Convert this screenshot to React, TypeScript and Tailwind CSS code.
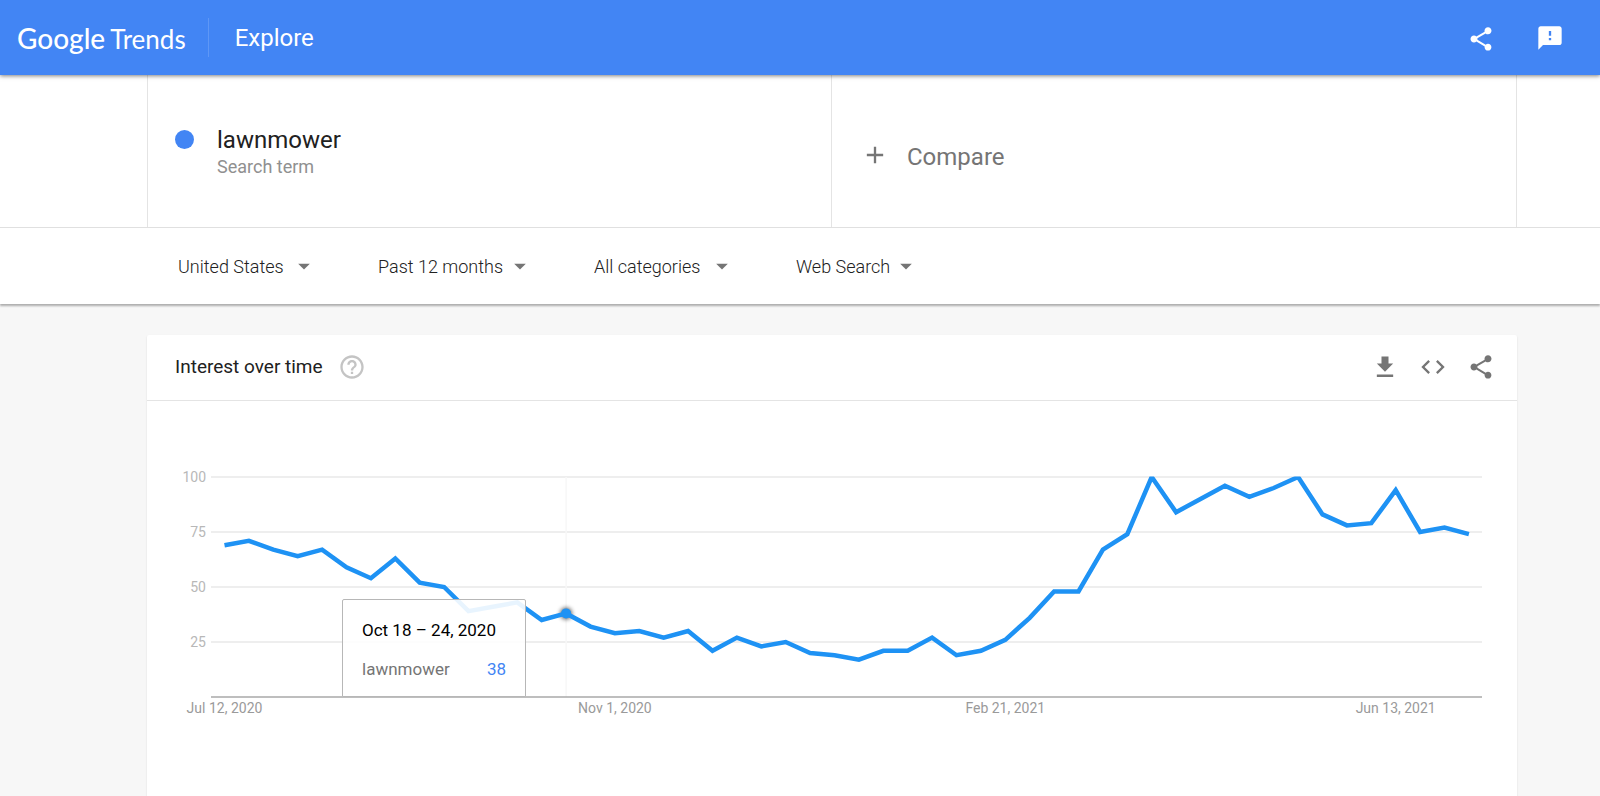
import React from "react";
import { MdAdd, MdArrowDropDown, MdCode, MdFeedback, MdHelpOutline, MdShare } from "react-icons/md";

const values = [
  69, 71, 67, 64, 67, 59, 54, 63, 52, 50, 39, 41, 43, 35, 38, 32, 29, 30, 27, 30, 21, 27, 23, 25, 20, 19,
  17, 21, 21, 27, 19, 21, 26, 36, 48, 48, 67, 74, 100, 84, 90, 96, 91, 95, 100, 83, 78, 79, 94, 75, 77, 74
];
const ticks = [100, 75, 50, 25];
const dates = [
  { index: 0, label: "Jul 12, 2020" },
  { index: 16, label: "Nov 1, 2020" },
  { index: 32, label: "Feb 21, 2021" },
  { index: 48, label: "Jun 13, 2021" }
];
const filters = [
  { label: "Region", value: "United States", width: "w-[140px]" },
  { label: "Time range", value: "Past 12 months", width: "w-[156px]" },
  { label: "Category", value: "All categories", width: "w-[142px]" },
  { label: "Search type", value: "Web Search", width: "w-[124px]" }
];
const active = 14;

const xAt = (index: number) => 77.5 + index * 24.4;
const yAt = (value: number) => 296 - value * 2.2;

function DownloadIcon() {
  return <svg viewBox="0 0 24 24" className="size-7" fill="currentColor" aria-hidden="true">
      <path d="M19 9h-4V3H9v6H5l7 7 7-7zM5 18.5v2h14v-2H5z" />
    </svg>;
}

function Header() {
  return <header className="relative z-10 flex h-[75px] items-center bg-[#4285f4] pl-[17px] pr-[36px] text-white shadow-[0_1px_4px_rgba(0,0,0,0.5)]">
      <a href="#home" className="flex items-baseline gap-[5px] pt-0.5 font-['Lato',sans-serif] leading-8">
        <span className="text-[28px] font-medium">Google</span>
        <span className="text-[26px]">Trends</span>
      </a>
      <div className="ml-[22px] h-[39px] w-px bg-[#5e97f6]" />
      <h1 className="ml-[26px] text-2xl">Explore</h1>
      <div className="ml-auto flex gap-[41px]">
        <button aria-label="Share" className="pt-0.5"><MdShare className="size-7" /></button>
        <button aria-label="Send feedback"><MdFeedback className="size-7" /></button>
      </div>
    </header>;
}

function SearchTerms() {
  return <section className="border-b border-[#e0e0e0] bg-white pl-[147px] pr-[83px]">
      <div className="grid h-[152px] grid-cols-2 border-x border-[#e4e4e4]">
        <div className="flex gap-[23px] border-r border-[#e4e4e4] pl-[27px] pt-[50px]">
          <span className="mt-[5px] size-[19px] rounded-full bg-[#4285f4]" />
          <div>
            <div className="text-2xl leading-[30px] text-[#212121]">lawnmower</div>
            <div className="text-lg leading-6 text-[#909090]">Search term</div>
          </div>
        </div>
        <button className="flex items-center gap-[18px] pl-[29px] pt-2 text-[#757575]">
          <MdAdd className="size-7" />
          <span className="pt-1 text-2xl">Compare</span>
        </button>
      </div>
    </section>;
}

function Filters() {
  return <section className="relative flex h-[76px] items-center gap-[60px] bg-white pl-[178px] shadow-[0_2px_2px_rgba(0,0,0,0.3)]">
      {filters.map(filter => <label key={filter.label} className={`flex items-center ${filter.width}`}>
          <select aria-label={filter.label} className="min-w-0 flex-1 appearance-none bg-transparent pt-0.5 text-lg font-light text-[#212121]">
            <option>{filter.value}</option>
          </select>
          <MdArrowDropDown className="pointer-events-none -ml-7 size-7 text-[#757575]" />
        </label>)}
    </section>;
}

function Chart() {
  const points = values.map((value, index) => `${xAt(index)},${yAt(value)}`).join(" ");
  return <div className="relative">
      <svg viewBox="0 0 1370 396" className="w-full" role="img" aria-label="Interest over time">
        <defs>
          <clipPath id="plot">
            <rect x="64" y="75.5" width="1271" height="221" />
          </clipPath>
          <filter id="glow" x="-100%" y="-100%" width="300%" height="300%">
            <feGaussianBlur stdDeviation="2" />
          </filter>
        </defs>
        {ticks.map(tick => <g key={tick}>
            <line x1="64" x2="1335" y1={yAt(tick)} y2={yAt(tick)} stroke="#e8e8e8" strokeWidth="1.5" />
            <text x="59" y={yAt(tick) + 5} textAnchor="end" fontSize="14" fill="#b8b8b8">{tick}</text>
          </g>)}
        <line x1={xAt(active)} x2={xAt(active)} y1="76" y2="296" stroke="#f7f7f7" strokeWidth="1.5" />
        <line x1="64" x2="1335" y1="296" y2="296" stroke="#a8a8a8" strokeWidth="1.5" />
        <circle cx={xAt(active)} cy={yAt(values[active])} r="6" fill="#000" opacity="0.6" filter="url(#glow)" />
        <polyline points={points} fill="none" stroke="#1e92f4" strokeWidth="4.5" clipPath="url(#plot)" />
        <circle cx={xAt(active)} cy={yAt(values[active])} r="5" fill="#1e92f4" />
        {dates.map(date => <text key={date.label} x={xAt(date.index)} y="312" textAnchor="middle" fontSize="14" fill="#9a9a9a">{date.label}</text>)}
      </svg>
      <div className="absolute left-[195px] top-[198px] w-[184px] rounded-t-xs border border-[#b7b7b7] bg-white/90 px-[19px] pb-[15px] pt-[18px] text-[17px] leading-6">
        <div className="whitespace-nowrap text-black">Oct 18 – 24, 2020</div>
        <div className="mt-[15px] flex justify-between">
          <span className="text-[#757575]">lawnmower</span>
          <span className="text-[#4285f4]">38</span>
        </div>
      </div>
    </div>;
}

export default function App() {
  return <div className="min-h-screen bg-[#f7f7f7] font-['Roboto',sans-serif]">
      <Header />
      <SearchTerms />
      <Filters />
      <main className="pl-[147px] pr-[83px] pt-[31px]">
        <section className="rounded-t-xs bg-white shadow-[0_1px_2px_rgba(0,0,0,0.12)]">
          <div className="flex h-[66px] items-center border-b border-[#e4e4e4] pb-0.5 pl-[28px] pr-[22px]">
            <h2 className="pt-0.5 text-[19px] text-[#212121]">Interest over time</h2>
            <button aria-label="Help" className="ml-[15px] text-[#c4c4c4]"><MdHelpOutline className="size-7" /></button>
            <div className="ml-auto flex gap-5 text-[#757575]">
              <button aria-label="Download"><DownloadIcon /></button>
              <button aria-label="Embed"><MdCode className="size-7" /></button>
              <button aria-label="Share chart"><MdShare className="size-7" /></button>
            </div>
          </div>
          <Chart />
        </section>
      </main>
    </div>;
}
